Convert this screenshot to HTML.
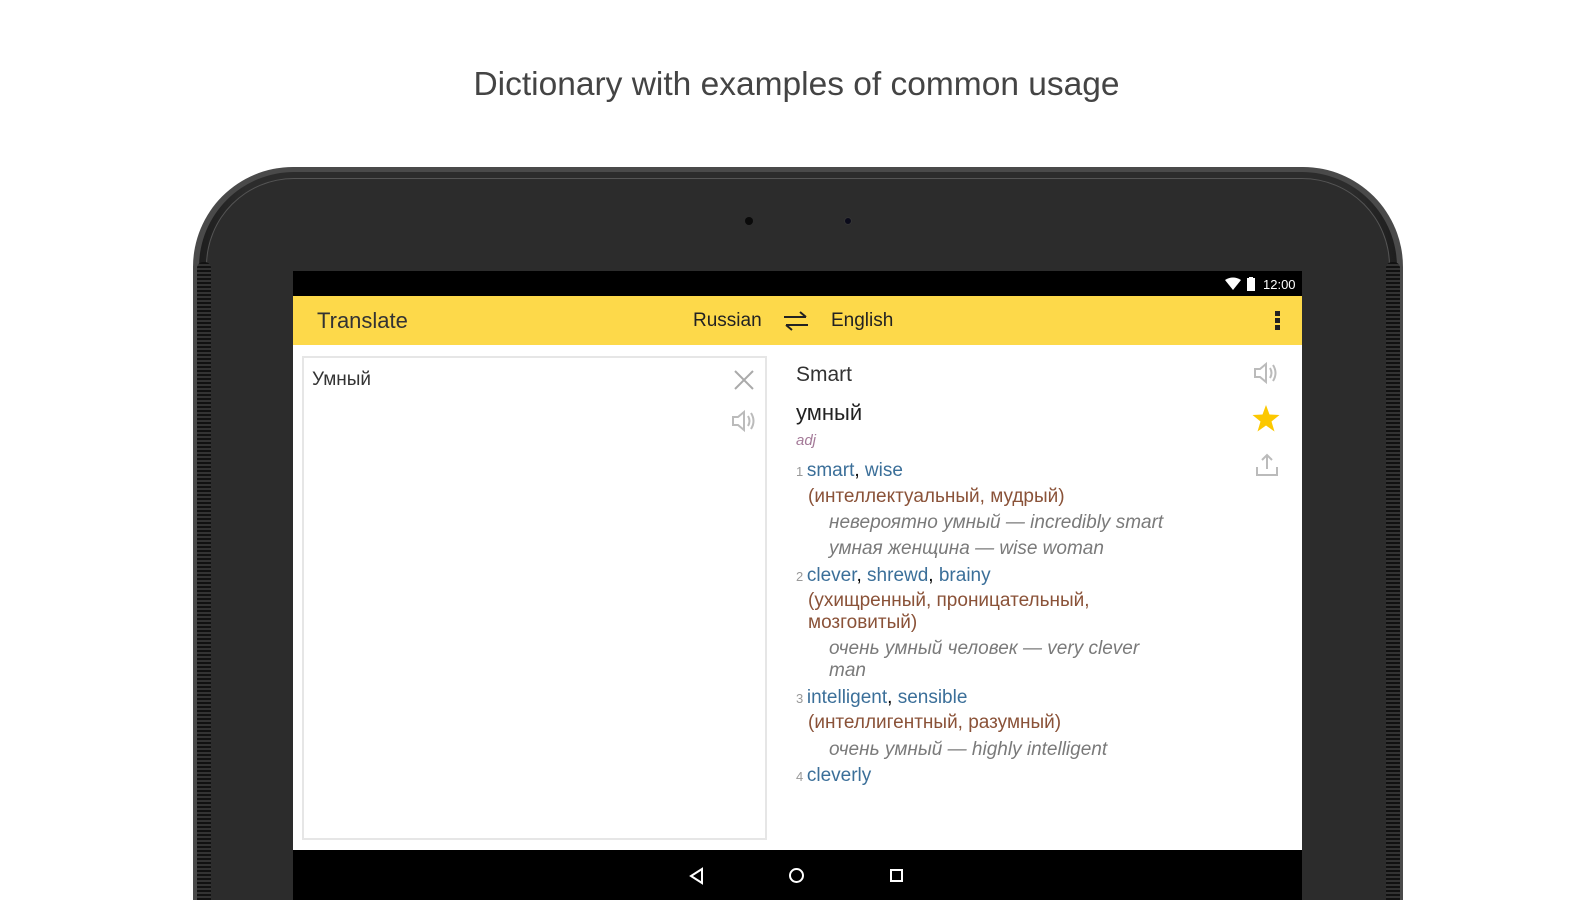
<!DOCTYPE html>
<html style="width:1593px;height:900px;overflow:hidden"><head><meta charset="utf-8"><style>
*{margin:0;padding:0;box-sizing:border-box}
body{width:1593px;height:900px;background:#fff;position:relative;overflow:hidden;font-family:"Liberation Sans","DejaVu Sans",sans-serif}
.a{position:absolute;white-space:nowrap}
.t{line-height:24px;font-size:19px}
.b{color:#3b6f99}.br{color:#8a5238}.g{color:#7a7a7a;font-style:italic}.n{color:#999;font-size:13px}
</style></head><body>
<div class="a" style="left:0;width:1593px;top:64px;text-align:center;font-size:33.5px;color:#444;line-height:42px">Dictionary with examples of common usage</div>
<!-- tablet -->
<div class="a" style="left:193px;top:167px;width:1210px;height:733px;border-radius:100px 100px 0 0;background:#4a4a4a"></div>
<div class="a" style="left:199px;top:172px;width:1198px;height:728px;border-radius:95px 95px 0 0;background:linear-gradient(90deg,#1e1e1e,#2c2c2c 4%,#2c2c2c 96%,#1e1e1e)"></div>
<div class="a" style="left:206px;top:178px;width:1184px;height:722px;border-radius:88px 88px 0 0;background:#2c2c2c;border:1px solid #555;border-bottom:0"></div>
<div class="a" style="left:197px;top:262px;width:14px;height:638px;background:repeating-linear-gradient(0deg,#111 0 2px,#333 2px 4px);border-radius:6px 6px 0 0"></div>
<div class="a" style="left:1386px;top:262px;width:14px;height:638px;background:repeating-linear-gradient(0deg,#111 0 2px,#333 2px 4px);border-radius:6px 6px 0 0"></div>
<div class="a" style="left:745px;top:217px;width:8px;height:8px;border-radius:50%;background:#0a0a0a"></div>
<div class="a" style="left:844px;top:217px;width:8px;height:8px;border-radius:50%;background:#0a0a1a;border:1px solid #333"></div>
<!-- screen -->
<div class="a" style="left:293px;top:271px;width:1009px;height:629px;background:#000"></div>
<div class="a" style="left:293px;top:296px;width:1009px;height:49px;background:#fdd94a"></div>
<div class="a" style="left:293px;top:345px;width:1009px;height:505px;background:#fff"></div>
<!-- status -->
<svg class="a" style="left:1225px;top:277px" width="48" height="15"><path d="M0 3 Q8 -2 16 3 L8 13Z" fill="#fff"/><rect x="22" y="1" width="8" height="13" fill="#fff"/><rect x="24" y="0" width="4" height="2" fill="#fff"/></svg>
<div class="a" style="left:1263px;top:277px;color:#fff;font-size:13px;line-height:15px">12:00</div>
<!-- toolbar -->
<div class="a" style="left:317px;top:308px;font-size:22px;color:#333;line-height:26px">Translate</div>
<div class="a" style="left:693px;top:310px;font-size:19px;color:#222;line-height:22px">Russian</div>
<svg class="a" style="left:782px;top:310px" width="28" height="22" fill="none" stroke="#222" stroke-width="2"><path d="M2 7H24M18 2L24 7"/><path d="M26 15H4M10 20L4 15"/></svg>
<div class="a" style="left:831px;top:310px;font-size:19px;color:#222;line-height:22px">English</div>
<div class="a" style="left:1275px;top:311px;width:5px;height:5px;background:#222;box-shadow:0 7px #222,0 14px #222"></div>
<!-- left box -->
<div class="a" style="left:302px;top:356px;width:465px;height:484px;border:2px solid #e6e6e6"></div>
<div class="a" style="left:312px;top:369px;font-size:19px;color:#333;line-height:22px">Умный</div>
<svg class="a" style="left:734px;top:370px" width="20" height="20" stroke="#aaa" stroke-width="2"><path d="M1 1L19 19M19 1L1 19"/></svg>
<svg class="a" style="left:731px;top:409px" width="28" height="24" fill="none" stroke="#bbb" stroke-width="2"><path d="M2 8H7L13 3V21L7 16H2Z"/><path d="M17 7Q20 12 17 17M20 4Q25 12 20 20"/></svg>
<!-- right -->
<svg class="a" style="left:1253px;top:361px" width="28" height="24" fill="none" stroke="#bbb" stroke-width="2"><path d="M2 8H7L13 3V21L7 16H2Z"/><path d="M17 7Q20 12 17 17M20 4Q25 12 20 20"/></svg>
<svg class="a" style="left:1252px;top:405px" width="28" height="27"><path d="M14 0L17.5 9.5L27.5 10L19.5 16.5L22.5 26.5L14 20.5L5.5 26.5L8.5 16.5L0.5 10L10.5 9.5Z" fill="#fcc800"/></svg>
<svg class="a" style="left:1255px;top:453px" width="24" height="24" fill="none" stroke="#bbb" stroke-width="2"><path d="M12 2V16M7 7L12 2L17 7"/><path d="M2 14V22H22V14"/></svg>
<div class="a" style="left:796px;top:363px;font-size:21px;color:#333;line-height:24px">Smart</div>
<div class="a" style="left:796px;top:401px;font-size:22px;color:#222;line-height:24px">умный</div>
<div class="a" style="left:796px;top:432px;font-size:15px;color:#a47a98;font-style:italic;line-height:18px">adj</div>
<div class="a t" style="left:796px;top:459px"><span class="n">1 </span><span class="b">smart</span>, <span class="b">wise</span></div>
<div class="a t br" style="left:808px;top:485px">(интеллектуальный, мудрый)</div>
<div class="a t g" style="left:829px;top:511px">невероятно умный — incredibly smart</div>
<div class="a t g" style="left:829px;top:537px">умная женщина — wise woman</div>
<div class="a t" style="left:796px;top:564px"><span class="n">2 </span><span class="b">clever</span>, <span class="b">shrewd</span>, <span class="b">brainy</span></div>
<div class="a t br" style="left:808px;top:589px">(ухищренный, проницательный,</div>
<div class="a t br" style="left:808px;top:611px">мозговитый)</div>
<div class="a t g" style="left:829px;top:637px">очень умный человек — very clever</div>
<div class="a t g" style="left:829px;top:659px">man</div>
<div class="a t" style="left:796px;top:686px"><span class="n">3 </span><span class="b">intelligent</span>, <span class="b">sensible</span></div>
<div class="a t br" style="left:808px;top:711px">(интеллигентный, разумный)</div>
<div class="a t g" style="left:829px;top:738px">очень умный — highly intelligent</div>
<div class="a t" style="left:796px;top:764px"><span class="n">4 </span><span class="b">cleverly</span></div>
<!-- nav -->
<svg class="a" style="left:688px;top:867px" width="18" height="18" fill="none" stroke="#fff" stroke-width="2"><path d="M14 2V16L3 9Z"/></svg>
<div class="a" style="left:789px;top:868px;width:15px;height:15px;border:2px solid #fff;border-radius:50%"></div>
<div class="a" style="left:890px;top:869px;width:13px;height:13px;border:2px solid #fff"></div>
</body></html>
